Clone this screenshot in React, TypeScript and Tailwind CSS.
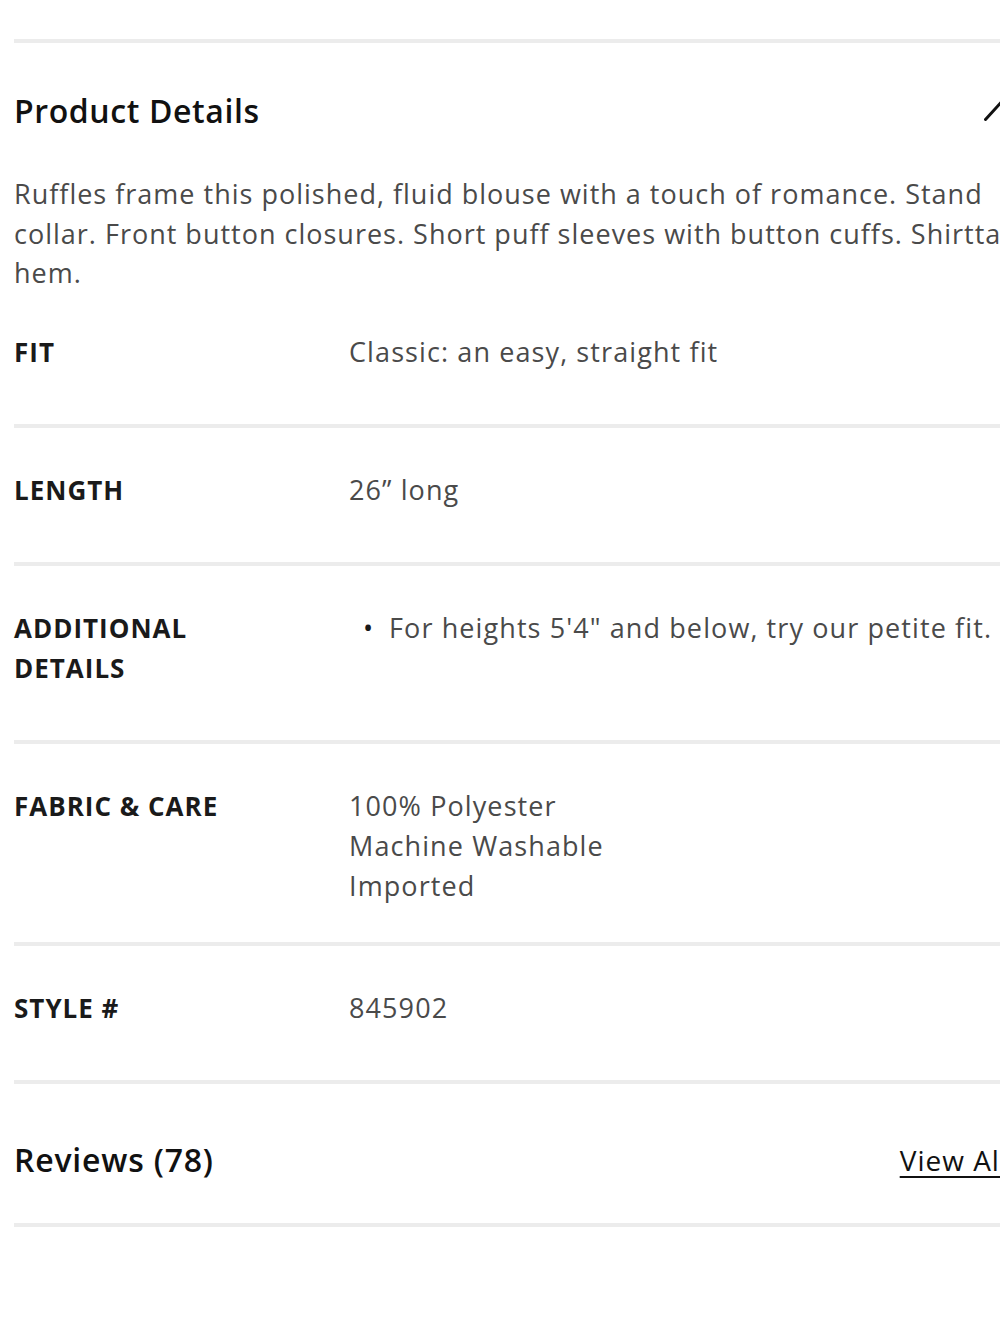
import React from "react";

const font = { fontFamily: "'Open Sans', Lato, 'Liberation Sans', sans-serif" };

type Row = { label: string[]; value: React.ReactNode; first?: boolean };

function Divider() {
  return <div className="h-[4px] w-full bg-[#ececec]" />;
}

function SpecRow({ label, value, first }: Row) {
  return (
    <div
      className={`grid grid-cols-[335px_1fr] ${first ? "pt-[39px]" : "pt-[42px]"} pb-[36px]`}
    >
      <div className="mb-[16px] text-[26px] font-bold uppercase leading-[40px] tracking-[1px] text-[#1a1a1a]">
        {label.map((l) => (
          <div key={l}>{l}</div>
        ))}
      </div>
      <div className="text-[27px] leading-[40px] tracking-[1.1px] text-[#4a4a4a]">{value}</div>
    </div>
  );
}

function ChevronUp() {
  return (
    <svg width="34" height="20" viewBox="0 0 34 20" fill="none" aria-hidden="true">
      <path
        d="M1.5 18.5 L17 1.5 L32.5 18.5"
        stroke="#111"
        strokeWidth="3"
        strokeLinecap="round"
        strokeLinejoin="round"
      />
    </svg>
  );
}

export default function App() {
  return (
    <div className="w-[1000px] min-h-[1333px] overflow-hidden bg-white" style={font}>
      <div className="w-[1032px] px-[14px] pt-[39px]">
        <Divider />

        {/* Product details accordion (open) */}
        <div className="flex items-center justify-between pt-[48px]">
          <h2 className="text-[32px] font-semibold leading-[40px] tracking-[0.6px] text-[#111]">
            Product Details
          </h2>
          <ChevronUp />
        </div>

        <p className="mt-[43px] text-[27px] leading-[39.5px] tracking-[1px] text-[#4a4a4a]">
          Ruffles frame this polished, fluid blouse with a touch of romance. Stand collar. Front
          button closures. Short puff sleeves with button cuffs. Shirttail hem.
        </p>

        <SpecRow first label={["FIT"]} value="Classic: an easy, straight fit" />
        <Divider />
        <SpecRow label={["LENGTH"]} value="26” long" />
        <Divider />
        <SpecRow
          label={["ADDITIONAL", "DETAILS"]}
          value={
            <ul className="flex flex-col">
              <li className="flex">
                <span className="w-[40px] pl-[14px] text-[#1a1a1a]">•</span>
                <span>For heights 5'4" and below, try our petite fit.</span>
              </li>
            </ul>
          }
        />
        <Divider />
        <SpecRow
          label={["FABRIC & CARE"]}
          value={
            <div>
              <div>100% Polyester</div>
              <div>Machine Washable</div>
              <div>Imported</div>
            </div>
          }
        />
        <Divider />
        <SpecRow label={["STYLE #"]} value="845902" />
        <Divider />

        {/* Reviews header */}
        <div className="flex items-center justify-between pt-[56px] pb-[43px]">
          <h2 className="text-[32px] font-semibold leading-[40px] tracking-[0.8px] text-[#111]">
            Reviews (78)
          </h2>
          <a
            href="#"
            className="mr-[10px] text-[28px] leading-[40px] tracking-[1px] text-[#111] underline decoration-2 underline-offset-[5px]"
          >
            View All
          </a>
        </div>
        <Divider />
      </div>
    </div>
  );
}
